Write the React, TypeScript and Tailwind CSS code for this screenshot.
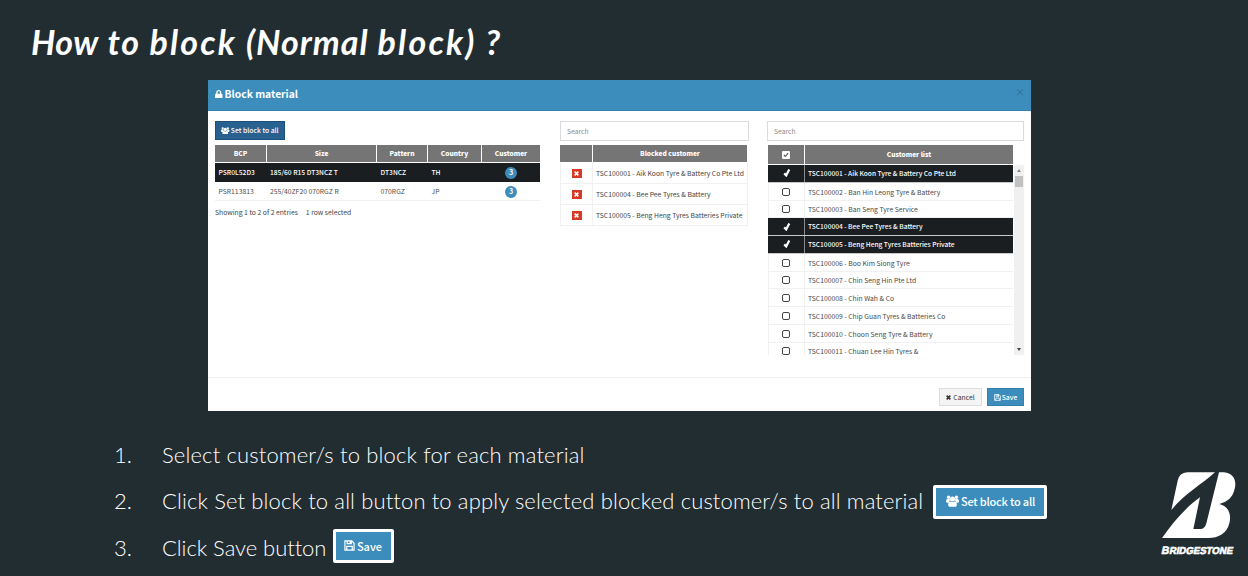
import type { ReactNode } from "react";
import { FaLock } from "react-icons/fa";

const UI = "font-['Noto_Sans_CJK_SC','Noto_Sans',sans-serif]";

function UsersIcon({ className }: { className: string }) {
  return (
    <svg viewBox="0 0 30 26" className={className} fill="currentColor">
      <circle cx="6" cy="4.5" r="4" />
      <circle cx="24" cy="4.5" r="4" />
      <path d="M9 9C4 8 0 8 0 13c0 3 1 4 3 4h4c0-3 1-5 3-6zM21 9c5-1 9-1 9 4 0 3-1 4-3 4h-4c0-3-1-5-3-6z" />
      <circle cx="15" cy="8.500" r="5.800" />
      <path d="M10 14c-4 0-5 4-5 8 0 3 1.500 4 4 4h12c2.500 0 4-1 4-4 0-4-1-8-5-8-3 2-7 2-10 0z" />
    </svg>
  );
}

function FloppyIcon({ className }: { className: string }) {
  return (
    <svg viewBox="0 0 24 24" className={className} fill="none" stroke="currentColor" strokeWidth="2.600">
      <path d="M2 2h15l5 5v15H2zM7 2v6h9V2M6 22v-8h12v8" />
      <path d="M12 2h4v6h-4z" fill="currentColor" stroke="none" />
    </svg>
  );
}

function CrossIcon({ className }: { className: string }) {
  return (
    <svg viewBox="0 0 10 10" className={className} stroke="currentColor" strokeWidth="3.200">
      <path d="M1.300 1.300l7.400 7.400M8.700 1.300L1.300 8.700" />
    </svg>
  );
}

function CheckMark() {
  return (
    <svg viewBox="0 0 10 10" className="ml-[2px] h-[8px] w-[8px]" fill="none" stroke="white" strokeWidth="2.800">
      <path d="M1.500 5.500L4 8 7.800 0.600" />
    </svg>
  );
}

function SearchBox({ className }: { className: string }) {
  return (
    <div className={`flex h-[20px] items-center border border-[#d9dbdf] pt-px pl-[6px] text-[6.800px] text-[#8b8b8b] ${className}`}>
      Search
    </div>
  );
}

function Th({ children, className = "" }: { children?: ReactNode; className?: string }) {
  return (
    <div className={`flex items-center justify-center bg-[#757575] text-[6.600px] font-black text-white ${className}`}>
      {children}
    </div>
  );
}

function Badge() {
  return (
    <span className="flex h-[12px] w-[12.500px] items-center justify-center rounded-full bg-[#3c8dbc] text-[7px] font-bold text-white">
      3
    </span>
  );
}

const materials = [
  { bcp: "PSR0L52D3", size: "185/60 R15 DT3NCZ T", pattern: "DT3NCZ", country: "TH", selected: true },
  { bcp: "PSR113813", size: "255/40ZF20 070RGZ R", pattern: "070RGZ", country: "JP", selected: false },
];

const blocked = [
  "TSC100001 - Aik Koon Tyre & Battery Co Pte Ltd",
  "TSC100004 - Bee Pee Tyres & Battery",
  "TSC100005 - Beng Heng Tyres Batteries Private",
];

const customers = [
  { name: "TSC100001 - Aik Koon Tyre & Battery Co Pte Ltd", on: true },
  { name: "TSC100002 - Ban Hin Leong Tyre & Battery", on: false },
  { name: "TSC100003 - Ban Seng Tyre Service", on: false },
  { name: "TSC100004 - Bee Pee Tyres & Battery", on: true },
  { name: "TSC100005 - Beng Heng Tyres Batteries Private", on: true },
  { name: "TSC100006 - Boo Kim Siong Tyre", on: false },
  { name: "TSC100007 - Chin Seng Hin Pte Ltd", on: false },
  { name: "TSC100008 - Chin Wah & Co", on: false },
  { name: "TSC100009 - Chip Guan Tyres & Batteries Co", on: false },
  { name: "TSC100010 - Choon Seng Tyre & Battery", on: false },
  { name: "TSC100011 - Chuan Lee Hin Tyres &", on: false },
];

function MaterialPanel() {
  const cols = "grid grid-cols-[51px_109px_50px_53px_58px] gap-x-px";
  return (
    <div className="w-[325px]">
      <div className="flex h-[19px] w-[70px] items-center justify-center gap-[1px] border border-[#1b4f7c] bg-[#286090] text-[6.800px] font-medium text-white">
        <UsersIcon className="h-[7.500px] w-[8.500px]" />
        Set block to all
      </div>
      <div className={`mt-[5px] h-[17px] ${cols}`}>
        <Th>BCP</Th>
        <Th>Size</Th>
        <Th>Pattern</Th>
        <Th>Country</Th>
        <Th>Customer</Th>
      </div>
      {materials.map((m) => (
        <div
          key={m.bcp}
          className={
            m.selected
              ? `mt-px h-[19px] items-center bg-[#1a1e21] text-[6.700px] font-medium text-white ${cols}`
              : `h-[19px] items-center border-b border-[#f1f1f1] pt-px text-[6.800px] text-[#4d4d4d] ${cols}`
          }
        >
          <div className="pl-[3.500px]">{m.bcp}</div>
          <div className="pl-[3px]">{m.size}</div>
          <div className="pl-[3.500px]">{m.pattern}</div>
          <div className="pl-[3.500px]">{m.country}</div>
          <div className="flex justify-center">
            <Badge />
          </div>
        </div>
      ))}
      <div className="mt-[6px] flex gap-[8px] text-[6.800px] leading-[10px] text-[#444]">
        <span>Showing 1 to 2 of 2 entries</span>
        <span>1 row selected</span>
      </div>
    </div>
  );
}

function BlockedPanel() {
  return (
    <div className="ml-[20px] w-[189px]">
      <SearchBox className="w-[189px]" />
      <div className="mt-[4px] mb-px grid h-[17px] w-[187px] grid-cols-[32px_154px] gap-x-px">
        <Th />
        <Th>Blocked customer</Th>
      </div>
      {blocked.map((name) => (
        <div
          key={name}
          className="grid h-[21px] w-[188px] grid-cols-[32px_155px] border-r border-b border-l border-[#f1f1f1] text-[6.800px] text-[#444]"
        >
          <div className="flex items-center justify-center border-r border-[#f1f1f1]">
            <span className="flex h-[9px] w-[10px] items-center justify-center bg-[#d73925] text-white">
              <CrossIcon className="h-[5px] w-[5px]" />
            </span>
          </div>
          <div className="flex items-center pt-px pl-[3px] whitespace-nowrap">{name}</div>
        </div>
      ))}
    </div>
  );
}

function CustomerPanel() {
  return (
    <div className="ml-[18px] w-[257px]">
      <SearchBox className="w-[257px]" />
      <div className="mt-[4px] ml-px grid h-[19px] w-[245px] grid-cols-[36px_208px] gap-x-px">
        <Th>
          <span className="flex h-[8px] w-[8px] items-center justify-center rounded-[1px] bg-white">
            <svg viewBox="0 0 10 10" className="h-[6px] w-[6px]" fill="none" stroke="#555" strokeWidth="1.800">
              <path d="M1.500 5L4 7.500 8.500 2" />
            </svg>
          </span>
        </Th>
        <Th>Customer list</Th>
      </div>
      <div className="mt-px ml-px flex h-[190px]">
        <div className="w-[245px] overflow-hidden">
          {customers.map((c) => (
            <div
              key={c.name}
              className={
                c.on
                  ? "grid h-[17.750px] grid-cols-[37px_208px] border-b border-[#c9c9c9] bg-[#1a1e21] text-[6.640px] font-medium text-white"
                  : "grid h-[17.750px] grid-cols-[36px_208px] border-b border-l border-[#f1f1f1] text-[6.800px] text-[#4a4a4a]"
              }
            >
              <div className={c.on ? "flex items-center justify-center border-r border-[#8b8b8b]" : "flex items-center justify-center border-r border-[#f1f1f1] pt-px pr-[2px]"}>
                {c.on ? <CheckMark /> : <span className="h-[8px] w-[8px] rounded-[2px] border border-[#444]" />}
              </div>
              <div className="flex items-center pt-px pl-[3px] whitespace-nowrap">{c.name}</div>
            </div>
          ))}
        </div>
        <div className="ml-px flex w-[10px] flex-col items-center bg-[#f0f0f0]">
          <div className="mt-[4px] h-0 w-0 border-x-[2px] border-b-[3px] border-x-transparent border-b-[#888]" />
          <div className="mt-[4px] h-[11px] w-[8px] bg-[#c1c1c1]" />
          <div className="mt-auto mb-[4px] h-0 w-0 border-x-[2.500px] border-t-[3px] border-x-transparent border-t-[#444]" />
        </div>
      </div>
    </div>
  );
}

function Modal() {
  return (
    <div className={`ml-[208px] flex h-[331px] w-[823px] flex-col bg-white ${UI}`}>
      <div className="flex h-[31px] items-start justify-between border-b border-[#3580ad] bg-[#3c8dbc] pr-[6px] pl-[7px]">
        <div className="flex h-[28px] items-center gap-[2px] text-[10.300px] font-bold text-white">
          <FaLock className="h-[8.500px] w-[7.500px]" />
          Block material
        </div>
        <div className="mt-[5px] text-[10px] leading-[14px] text-[#2c6c93]">×</div>
      </div>
      <div className="flex h-[267px] border-b border-[#f1f1f1] pt-[10px] pl-[7px]">
        <MaterialPanel />
        <BlockedPanel />
        <CustomerPanel />
      </div>
      <div className="flex justify-end gap-[5px] pt-[10px] pr-[7px] text-[6.800px]">
        <div className="flex h-[18px] w-[43px] items-center justify-center gap-[2px] border border-[#ddd] bg-[#f4f4f4] text-[#333]">
          <CrossIcon className="h-[5px] w-[5px]" />
          Cancel
        </div>
        <div className="flex h-[18px] w-[37px] items-center justify-center gap-px border border-[#367fa9] bg-[#3c8dbc] font-medium text-white">
          <FloppyIcon className="h-[7px] w-[7px]" />
          Save
        </div>
      </div>
    </div>
  );
}

function Step({ n, text, textClass, children }: { n: string; text: string; textClass: string; children?: ReactNode }) {
  return (
    <li className="flex h-[46.500px] items-center">
      <span className="mb-[2px] w-[48px]">{n}</span>
      <span className={`mb-[2px] whitespace-nowrap ${textClass}`}>{text}</span>
      {children}
    </li>
  );
}

function Logo() {
  return (
    <svg viewBox="0 0 294 330" className="absolute top-[460px] left-[1150px] h-[110px] w-[98px]" fill="white">
      <path d="M64 150L83 62Q88 38 112 37H195C160 70 105 100 64 150Z" />
      <path d="M207 37H222C250 39 262 62 253 90C248 112 232 126 208 132C236 139 245 163 238 190C230 222 205 234 175 234H36C70 185 112 138 150 112L130 207H153Q165 206 169 190Z" />
      <g transform="skewX(-12)" fontFamily="Liberation Sans Narrow, Liberation Sans" fontWeight="bold" stroke="white" strokeWidth="1.800">
        <text x="93" y="282" fontSize="32" textLength="23" lengthAdjust="spacingAndGlyphs">B</text>
        <text x="117" y="282" fontSize="30" textLength="190" lengthAdjust="spacingAndGlyphs">RIDGESTONE</text>
      </g>
    </svg>
  );
}

export default function App() {
  return (
    <main className="relative h-[576px] w-[1248px] overflow-hidden bg-[#222d32]">
      <h1 className="h-[80px] pt-[22px] pl-[31px] font-['Lato',sans-serif] text-[34px] leading-[40px] font-bold tracking-[1.500px] whitespace-nowrap text-white italic">
        <span className="tracking-[0.400px]">How</span> to{" "}
        <span className="tracking-[2.200px]">block</span> <span className="tracking-[1px]">(Normal</span>{" "}
        <span className="tracking-[2.200px]">block)</span> ?
      </h1>
      <Modal />
      <ol className="mt-[21px] pl-[114px] font-['Lato','Open_Sans',sans-serif] text-[22px] font-light text-white">
        <Step n="1." text="Select customer/s to block for each material" textClass="w-[433px] tracking-[0.160px]" />
        <Step n="2." text="Click Set block to all button to apply selected blocked customer/s to all material" textClass="w-[771px] tracking-[0.130px]">
          <div className={`flex h-[34px] w-[114px] items-center justify-center gap-[2px] rounded-[2px] border-[3px] border-white bg-[#3c8dbc] pb-px pl-px text-[11px] font-medium tracking-[-0.200px] ${UI}`}>
            <UsersIcon className="h-[12px] w-[13px]" />
            Set block to all
          </div>
        </Step>
        <Step n="3." text="Click Save button" textClass="w-[171px] tracking-[-0.060px]">
          <div className={`mb-[4px] flex h-[34px] w-[61px] items-center justify-center gap-[2px] rounded-[2px] border-[3px] border-white bg-[#3c8dbc] pr-px pb-px text-[11px] font-medium ${UI}`}>
            <FloppyIcon className="h-[11px] w-[11px]" />
            Save
          </div>
        </Step>
      </ol>
      <Logo />
    </main>
  );
}
